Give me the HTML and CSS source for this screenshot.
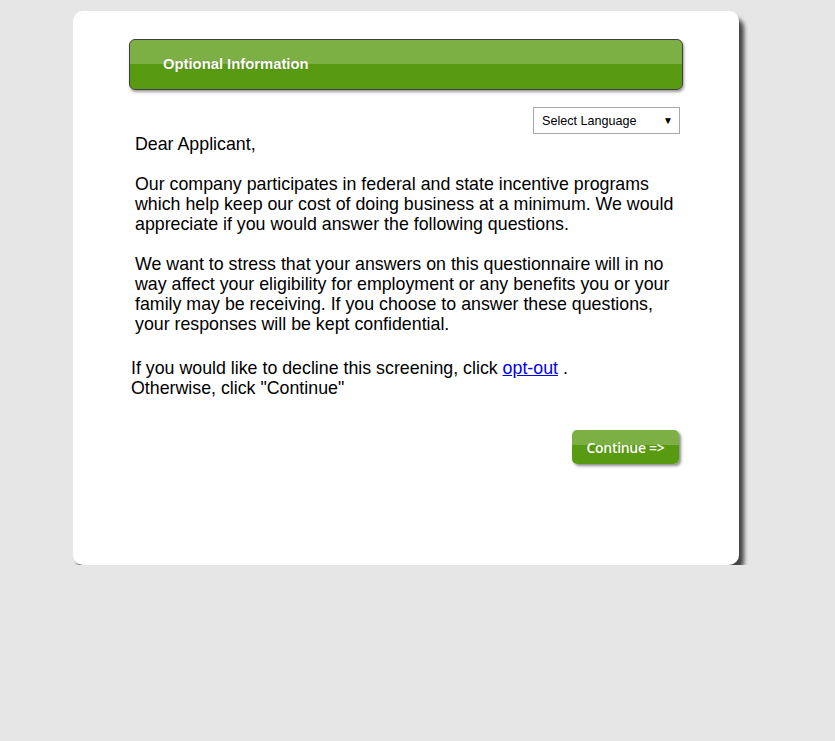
FILE: index.html
```html
<!DOCTYPE html>
<html lang="en">
<head>
  <meta charset="UTF-8">
  <title>Optional Information</title>
  <link rel="stylesheet" href="styles.css">
</head>
<body>
  <div class="card">
    <div class="header">
      <span class="header-title">Optional Information</span>
    </div>

    <div class="lang-row">
      <div class="lang-select">
        <span>Select Language</span>
        <span class="arrow">&#9660;</span>
      </div>
    </div>

    <div class="letter">
      <p>Dear Applicant,</p>
      <p>Our company participates in federal and state incentive programs which help keep our cost of doing business at a minimum. We would appreciate if you would answer the following questions.</p>
      <p>We want to stress that your answers on this questionnaire will in no way affect your eligibility for employment or any benefits you or your family may be receiving. If you choose to answer these questions, your responses will be kept confidential.</p>
    </div>

    <div class="decline">
      If you would like to decline this screening, click <a href="#">opt-out</a> .<br>
      Otherwise, click "Continue"
    </div>

    <div class="actions">
      <button class="continue">Continue =&gt;</button>
    </div>
  </div>
</body>
</html>
```

FILE: styles.css
```css
body {
  margin: 0;
  background: #e6e6e6;
  font-family: "Liberation Sans", Arial, sans-serif;
  color: #000;
}

/* Card */
.card {
  width: 666px;
  height: 554px;
  box-sizing: border-box;
  margin: 11px 0 0 73px;
  padding: 28px 0 0 56px;
  background: #fff;
  border-radius: 10px;
  box-shadow: 5px 7px 4px rgba(0, 0, 0, 0.7);
}

/* Green header bar */
.header {
  width: 554px;
  height: 51px;
  box-sizing: border-box;
  display: flex;
  align-items: center;
  padding: 0 0 2px 33px;
  border: 1px solid #3f3f3f;
  border-radius: 6px;
  background: linear-gradient(to bottom, #7db044 0%, #7db044 50%, #589a10 50%, #589a10 100%);
  box-shadow: 1px 2px 3px rgba(0, 0, 0, 0.4);
}

.header-title {
  color: #fff;
  font-size: 14.8px;
  font-weight: bold;
  text-shadow: 0 0 1px rgba(0, 0, 0, 0.3);
}

/* Language select */
.lang-row {
  display: flex;
  justify-content: flex-end;
  width: 551px;
  margin-top: 17px;
}

.lang-select {
  width: 147px;
  height: 27px;
  box-sizing: border-box;
  display: flex;
  align-items: center;
  justify-content: space-between;
  padding: 0 6px 0 8px;
  border: 1px solid #a9a9a9;
  font-size: 12.6px;
}

.lang-select .arrow {
  font-size: 10px;
}

/* Letter body */
.letter {
  width: 545px;
  margin: 0 0 0 6px;
  font-size: 17.8px;
  line-height: 20px;
}

.letter p {
  margin: 0 0 20px;
}

.decline {
  margin: 24px 0 0 2px;
  font-size: 17.8px;
  line-height: 20px;
}

.decline a {
  color: #0000ee;
}

/* Continue button */
.actions {
  width: 550px;
  display: flex;
  justify-content: flex-end;
  margin-top: 32px;
}

.continue {
  width: 107px;
  height: 34px;
  border: none;
  border-radius: 5px;
  background: linear-gradient(to bottom, #7db044 0%, #7db044 45%, #589a10 45%, #589a10 100%);
  color: #fff;
  font-family: "Open Sans", sans-serif;
  font-size: 14px;
  font-weight: 600;
  letter-spacing: -0.3px;
  box-shadow: 2px 2px 3px rgba(0, 0, 0, 0.45);
  cursor: pointer;
}
```
